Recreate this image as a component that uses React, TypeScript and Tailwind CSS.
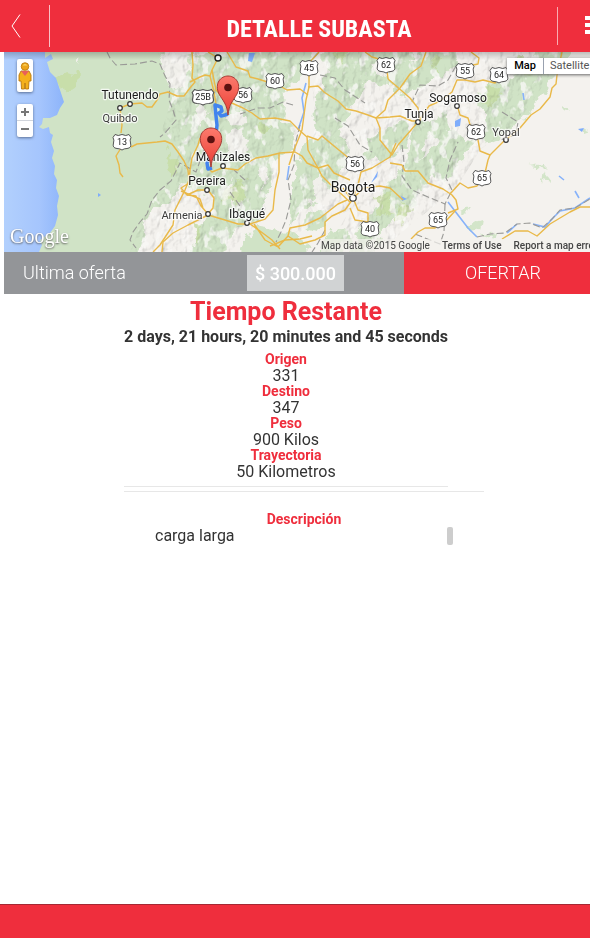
import React from "react";

const ROADS = [
  "M192 52L193 65L192 78L195 82L190 88L184 96L177 96L168 92L160 94L157 100L152 107L147 107L142 103L130 104L120 108L122 125L121 133",
  "M121 148L116 156L119 165L120 173L123 177",
  "M131 147L137 144L157 142L165 141L172 144L178 152L184 161L188 170L189 182",
  "M190 82L200 77L205 75L210 76L212 70L218 58L208 52",
  "M212 70L216 90L225 100L243 108L252 113L260 119L275 118L290 121L298 129L307 137L308 150L318 168",
  "M227 52L236 67L248 71L250 77L258 79L280 86L287 90L300 89L308 95",
  "M319 52L309 63L309 87L306 100L304 115L302 130L294 150L289 165",
  "M308 87L318 86L324 92L330 96L338 101L346 109L356 111L368 115L376 118L385 110L388 100L400 88L410 74L421 66L426 52",
  "M307 136L318 140L322 136L334 146L345 155L353 162",
  "M365 52L372 57L386 61L388 79",
  "M376 118L380 128L380 140L392 155L398 145L418 122L429 106L440 101L452 92L457 80L465 80L475 82L483 80L495 83L500 76L514 69L526 68",
  "M376 118L390 117L400 116L412 121L418 121",
  "M388 79L402 91L410 98L418 108L420 121",
  "M458 108L460 115L468 118L471 128L478 140L480 151L490 155L505 140L520 128L531 115L540 109L550 97L552 88L556 84L557 75L562 52",
  "M471 52L479 58L478 64L468 66",
  "M208 168L212 172L222 168L238 170L245 164L256 158L268 156L280 153L295 152L302 156L307 163L318 168L322 176L330 184L337 190L350 202",
  "M279 153L279 172L275 190L273 210L265 219L250 224L238 224L225 220L208 215",
  "M250 224L260 231L272 240L280 249M254 224L265 240L278 247L288 236L290 228L305 225L320 218L338 204L347 200",
  "M288 236L300 244L315 240L325 235L325 222L332 216L345 210L352 200L343 188",
  "M270 246L285 240L300 239L312 236",
  "M353 198L358 185L361 172L372 168L390 157L396 143",
  "M353 198L358 210L368 213L368 222L355 220L350 208",
  "M353 198L364 188L380 186L390 188L403 200",
  "M318 168L328 165L334 173L350 180",
  "M390 163L402 165L405 171L418 171L428 183L443 189L452 195L456 200L458 209L448 213",
  "M450 194L460 183L468 188L477 186L485 173L488 160L490 155",
  "M411 239L418 232L425 228L435 228L445 222L455 211",
  "M502 239L515 231L528 231L537 236L550 224L570 212L580 207L590 207",
  "M189 180L185 190L175 210L173 225L160 245L153 252",
  "M162 252L163 242L173 233L188 225L200 219L208 215",
  "M200 138L198 145L192 158L190 170L189 183L181 188L187 195L198 190L208 190L214 198L213 208L208 214",
  "M187 195L196 196L201 206L208 214M181 191L200 199L203 208",
  "M210 76L214 92L216 104",
];

const BORDERS = [
  "M107 52L110 58L116 65L135 64L152 61L160 64L165 76L170 84L169 100L173 110L176 120L165 133L160 137",
  "M204 150L196 172L180 163L171 181L160 190L152 200L147 214L140 222L133 232L130 240L136 248",
  "M293 105L283 102L270 108L258 108L240 114",
  "M300 125L295 145L294 165L288 180L291 200L286 220L281 232L276 242",
  "M320 75L335 78L345 90L365 103",
  "M335 118L348 126L360 145L372 152",
  "M456 66L448 80L438 86L420 85L412 102",
  "M502 112L518 122L516 135L500 140",
  "M402 145L404 162L402 176L412 190L428 197L445 204L452 190L446 178L450 160L458 142",
  "M477 237L490 234L505 233L517 224L530 223L542 228L552 219L560 210L575 208L590 199",
  "M445 204L444 232L440 244L415 234",
  "M325 230L318 243L312 252",
  "M230 192L240 206L236 216M245 180L234 170",
];

const SHIELDS: [string, number, number][] = [
  ["45", 309, 68],
  ["62", 386, 65],
  ["55", 465, 71],
  ["64", 499, 75],
  ["60", 275, 81],
  ["56", 243, 95],
  ["25B", 203, 97],
  ["13", 122, 142],
  ["62", 476, 132],
  ["56", 355, 164],
  ["65", 482, 178],
  ["65", 438, 220],
  ["40", 370, 229],
];

type City = { name: string; x: number; y: number; size: number; dot: [number, number] };

const CITIES: City[] = [
  { name: "Tutunendo", x: 130, y: 99, size: 12, dot: [130, 104] },
  { name: "Quibdo", x: 120, y: 122, size: 11, dot: [120, 108] },
  { name: "Manizales", x: 223, y: 161, size: 12, dot: [223, 166] },
  { name: "Pereira", x: 207, y: 185, size: 12, dot: [207, 190] },
  { name: "Armenia", x: 182, y: 219, size: 11, dot: [208, 214] },
  { name: "Ibagué", x: 247, y: 218, size: 12, dot: [247, 223] },
  { name: "Bogota", x: 353, y: 192, size: 14, dot: [353, 198] },
  { name: "Tunja", x: 419, y: 118, size: 12, dot: [418, 122] },
  { name: "Sogamoso", x: 458, y: 102, size: 12, dot: [457, 106] },
  { name: "Yopal", x: 506, y: 136, size: 11, dot: [506, 140] },
];

const MOUNTAINS =
  "M158 52H306L284 95L285 120L300 130L278 155L276 190L260 220L230 252H130L146 210L170 178L180 150L162 130L172 98ZM325 52H565L520 120L480 150L455 190L410 225L380 252H325L350 210L290 236L294 190L310 155L316 120L312 90Z";

function Pin({ x, y }: { x: number; y: number }) {
  return (
    <g transform={`translate(${x} ${y})`}>
      <path
        d="M0 0C-1 -11 -5 -14 -9 -21C-14 -32 -7 -39 0 -39C7 -39 14 -32 9 -21C5 -14 1 -11 0 0Z"
        fill="url(#pin)"
        stroke="#a63a34"
      />
      <circle cx="0" cy="-27.5" r="3.8" fill="#5c1110" />
    </g>
  );
}

function MapDrawing() {
  return (
    <svg
      viewBox="4 52 586 200"
      preserveAspectRatio="xMinYMid slice"
      className="block h-full w-full font-[Roboto,sans-serif]"
      role="img"
      aria-label="Map"
    >
      <defs>
        <linearGradient id="sea" x1="0" x2="1">
          <stop offset="0" stopColor="#b2d0fd" />
          <stop offset="0.6" stopColor="#a5c5fd" />
          <stop offset="1" stopColor="#8db4fa" />
        </linearGradient>
        <linearGradient id="pin" x1="0" x2="0" y1="0" y2="1">
          <stop offset="0" stopColor="#fc7a6d" />
          <stop offset="1" stopColor="#ea3f35" />
        </linearGradient>
        <linearGradient id="topShade" x1="0" x2="0" y1="0" y2="1">
          <stop offset="0" stopColor="#000" stopOpacity="0.22" />
          <stop offset="1" stopColor="#000" stopOpacity="0" />
        </linearGradient>
        <filter id="relief" x="0" y="0" width="100%" height="100%">
          <feTurbulence type="fractalNoise" baseFrequency="0.11 0.08" numOctaves="4" seed="8" />
          <feColorMatrix values="0 0 0 0 0  0 0 0 0 0  0 0 0 0 0  1 0 0 0 0" />
          <feDiffuseLighting surfaceScale="5" diffuseConstant="1.15" lightingColor="#ffffff">
            <feDistantLight azimuth="215" elevation="60" />
          </feDiffuseLighting>
          <feComposite in2="SourceGraphic" operator="in" />
        </filter>
        <filter id="clearings" x="0" y="0" width="100%" height="100%">
          <feTurbulence type="fractalNoise" baseFrequency="0.1 0.07" numOctaves="3" seed="21" />
          <feColorMatrix values="0 0 0 0 0.95  0 0 0 0 0.945  0 0 0 0 0.925  9 0 0 0 -5" />
          <feComposite in2="SourceGraphic" operator="in" />
        </filter>
        <filter id="ragged" x="0" y="0" width="100%" height="100%">
          <feTurbulence type="fractalNoise" baseFrequency="0.08" numOctaves="3" seed="4" />
          <feDisplacementMap in="SourceGraphic" scale="16" xChannelSelector="R" yChannelSelector="G" />
        </filter>
      </defs>

      <rect x="4" y="52" width="586" height="200" fill="#f4f2ee" />

      <g filter="url(#ragged)">
        <path
          fill="#d0e3c6"
          d="M30 40H162L170 75L184 92L188 60L212 54L245 40H318L308 68L286 90L284 120L296 128L290 150L272 160L270 190L258 218L236 230L220 260H190L198 226L215 216L214 196L186 185L168 200L150 214L135 260H20Z"
        />
        <path
          fill="#d0e3c6"
          d="M325 40H415L408 62L422 48L462 46L455 66L428 84L405 98L388 84L366 82L352 112L338 130L350 150L340 178L318 194L300 210L290 226L292 190L300 155L318 132L312 108L326 84Z"
        />
        <path
          fill="#d0e3c6"
          d="M386 128L402 120L408 136L396 158L366 162L370 140ZM412 128L446 112L450 134L478 140L462 158L450 178L430 180L416 204L398 212L380 240L372 262H345L360 230L378 204L388 182L404 164ZM476 96L492 82L520 72L545 46H576L548 84L530 112L516 122L508 136L480 142L486 118Z"
        />
        <path
          fill="#d0e3c6"
          d="M255 226L280 230L300 238L312 248L292 262H235ZM306 214L326 206L330 222L316 232L303 228ZM322 240L344 226L352 240L335 260H318Z"
        />
        <path
          fill="#f1f0eb"
          d="M158 52L177 54L176 76L186 92L174 90L164 74ZM228 136L240 130L248 142L246 152L236 158L228 148ZM226 112L240 112L244 124L232 126ZM206 102L210 116L199 128L195 112ZM370 66L388 60L394 78L378 76ZM222 190L231 178L238 202L230 209ZM258 172L266 166L264 190ZM312 188L322 176L330 190L317 202ZM425 140L432 130L437 144L419 160ZM84 58L80 66L78 60Z"
        />
        <path
          fill="#c6dca0"
          opacity="0.75"
          d="M58 78L68 72L78 75L76 90L64 94ZM168 150L178 158L174 178L166 168ZM228 186L246 180L248 196L236 206L222 200ZM258 122L270 124L266 136L256 132ZM336 50L350 48L342 66ZM374 196L392 192L392 214L378 218ZM400 202L412 210L402 224L394 220ZM484 86L500 88L496 104L486 102ZM516 56L534 58L530 76L518 74ZM432 54L444 58L436 70ZM190 220L202 228L198 244Z"
        />
        <path
          fill="#d3e5c9"
          d="M526 166L542 164L550 172L540 168ZM546 176L552 184L544 182ZM565 106L572 112L564 110ZM582 126L588 130L582 132ZM470 222L482 218L480 230L470 232ZM484 236L494 230L492 240ZM460 212L468 208L464 216Z"
        />
      </g>

      <path opacity="0.8" filter="url(#clearings)" d={MOUNTAINS} />
      <path className="mix-blend-multiply" opacity="0.26" filter="url(#relief)" fill="#fff" d={MOUNTAINS} />

      <path
        fill="url(#sea)"
        d="M4 52H45V58L51 54L53 59L47 62L50 72L56 78L60 90L64 102L60 108L57 115L50 118L43 118L42 124L39 127L43 129L49 127L50 133L53 135L51 142L54 151L52 158L55 166L54 174L57 180L56 188L59 196L57 206L58 215L55 226L50 233L40 240L42 245L39 252H4Z"
      />

      <g fill="#7fadfb">
        <path d="M249 53L255 53L252 62L248 61ZM455 121L461 118L460 126L455 127ZM371 183L378 171L377 177ZM98 193L101 195L98 197ZM578 129L584 128L582 132ZM401 196L407 199L402 201Z" />
        <path
          d="M318 53L309 63M306 83L302 98L304 112L298 130M289 166L287 180M448 202L458 215L468 228L477 237M507 233L517 224M533 224L545 227L552 219L560 211L575 208L590 198M575 191L579 198M523 93L524 100M559 176L564 180"
          fill="none"
          stroke="#86b2fa"
          strokeWidth="1.6"
        />
      </g>

      <g fill="none" stroke="#9a9a97" strokeWidth="1.1" strokeDasharray="7 3">
        {BORDERS.map((d) => (
          <path key={d} d={d} />
        ))}
      </g>
      <g fill="none" stroke="#e9b949" strokeWidth="1.4" strokeLinejoin="round">
        {ROADS.map((d) => (
          <path key={d} d={d} />
        ))}
      </g>

      <path
        d="M228 114L225 115L221 116L219 113L222 111L221 107L215 105L216 116L217 125L216 135M209 158L207 163L208 169L212 168"
        fill="none"
        stroke="#4284ee"
        strokeWidth="3.5"
        strokeLinejoin="round"
      />

      {SHIELDS.map(([label, x, y]) => (
        <g key={`${label}-${x}`} transform={`translate(${x} ${y})`}>
          <path
            transform={label.length > 2 ? "scale(1.2 1)" : undefined}
            d="M-7 -7.500Q-4 -5.500 0 -7.500Q4 -5.500 7 -7.500L9 -4.500Q7.500 -2 8.500 1Q10 6 5 6.500Q2 6.500 0 8Q-2 6.500 -5 6.500Q-10 6 -8.500 1Q-7.500 -2 -9 -4.500Z"
            fill="#fff"
            stroke="#555"
          />
          <text y="3" textAnchor="middle" fontSize="9" fill="#222">
            {label}
          </text>
        </g>
      ))}

      {CITIES.map((c) => (
        <g key={c.name}>
          <circle cx={c.dot[0]} cy={c.dot[1]} r={c.size > 12 ? 3.2 : 2.3} fill="#fff" stroke="#333" strokeWidth="1.2" />
          <text
            x={c.x}
            y={c.y}
            textAnchor="middle"
            fontSize={c.size}
            fill={c.size > 11 ? "#1c1c1c" : "#3c3c3c"}
            stroke="#fff"
            strokeWidth="2.5"
            strokeOpacity="0.75"
            strokeLinejoin="round"
            paintOrder="stroke"
          >
            {c.name}
          </text>
        </g>
      ))}
      <circle cx="218" cy="58" r="3" fill="#fff" stroke="#222" strokeWidth="1.4" />

      <Pin x={228} y={115} />
      <Pin x={211} y={167} />
      <rect x="4" y="52" width="586" height="8" fill="url(#topShade)" />
    </svg>
  );
}

function MapPanel() {
  return (
    <section className="relative ml-1 h-[200px] overflow-hidden font-[Roboto,sans-serif]">
      <MapDrawing />

      <button
        aria-label="Street View"
        className="absolute left-[13px] top-[7px] flex h-[33px] w-4 items-center justify-center rounded-xs bg-white shadow-[0_1px_3px_#5a6f95]"
      >
        <svg viewBox="0 0 14 28" className="h-7 w-3.5">
          <path
            d="M3 9H11L13 13V19H11L10.500 27H7.500L7 21L6.500 27H3.500L3 19H1V13Z"
            fill="#f4b01b"
            stroke="#b9770c"
            strokeWidth="0.9"
          />
          <path d="M3 9H11L7 14Z" fill="#e8605a" />
          <circle cx="7" cy="4.500" r="3.800" fill="#eda51b" stroke="#b9770c" strokeWidth="0.8" />
          <path d="M4.500 3.500Q7 0.500 9.500 3.500Z" fill="#fbd768" />
        </svg>
      </button>

      <div className="absolute left-[13px] top-[52px] flex w-4 flex-col rounded-xs bg-white shadow-[0_1px_3px_#5a6f95]">
        <button aria-label="Zoom in" className="flex h-4 items-center justify-center">
          <svg viewBox="0 0 8 8" className="size-2">
            <path d="M0 4H8M4 0V8" stroke="#777" strokeWidth="2" />
          </svg>
        </button>
        <span className="h-px w-full bg-gray-300" />
        <button aria-label="Zoom out" className="flex h-4 items-center justify-center">
          <svg viewBox="0 0 8 8" className="size-2">
            <path d="M0 4H8" stroke="#777" strokeWidth="2" />
          </svg>
        </button>
      </div>

      <div className="absolute left-[503px] top-[6px] flex h-4 text-[11px] leading-4 shadow-[0_1px_3px_#666]">
        <button className="w-9 bg-white font-medium text-black">Map</button>
        <button className="w-[57px] border-l border-gray-400 bg-white pl-1.5 text-left text-[#565656]">Satellite</button>
      </div>

      <a
        href="#google"
        className="absolute bottom-1 left-[6px] font-['Liberation_Serif',serif] text-[20px] leading-6 text-white [text-shadow:0_1px_2px_#555]"
      >
        Google
      </a>
      <div className="absolute bottom-0 left-[317px] flex gap-3 whitespace-nowrap bg-[#f4f2ee]/70 text-[10px] leading-[13px] text-[#444]">
        <span>Map data ©2015 Google</span>
        <a href="#terms" className="font-medium">Terms of Use</a>
        <a href="#report" className="font-medium">Report a map error</a>
      </div>
    </section>
  );
}

const DETAILS = [
  ["Origen", "331"],
  ["Destino", "347"],
  ["Peso", "900 Kilos"],
  ["Trayectoria", "50 Kilometros"],
];

export default function App() {
  return (
    <div className="flex min-h-screen flex-col overflow-x-hidden bg-white font-[Roboto,sans-serif] text-[#333]">
      <header className="flex h-[52px] items-center bg-[#ef2e3d] text-white">
        <button aria-label="Volver" className="flex h-[42px] w-[50px] items-center border-r border-white/70 pl-[11px]">
          <svg viewBox="0 0 10 24" className="h-6 w-2.5" fill="none" stroke="currentColor">
            <path d="M9 0.500L1 12L9 23.500" />
          </svg>
        </button>
        <h1 className="flex-1 pl-[31px] pt-1.5 text-center font-['Roboto_Condensed',Roboto,sans-serif] text-2xl font-bold">
          DETALLE SUBASTA
        </h1>
        <button aria-label="Menú" className="flex h-[38px] w-[33px] items-center justify-end border-l border-white/60">
          <svg viewBox="0 0 5 20" className="h-5 w-[5px]" fill="currentColor">
            <path d="M0 0H5V4H0ZM0 7H5V11H0ZM0 14H5V18H0Z" />
          </svg>
        </button>
      </header>

      <MapPanel />

      <section className="ml-1 flex h-[42px] text-lg text-white">
        <div className="flex w-[400px] items-center bg-[#939598] pl-[19px]">
          <label htmlFor="oferta" className="w-56 font-light">Ultima oferta</label>
          <input
            id="oferta"
            readOnly
            value="$ 300.000"
            className="h-9 w-[97px] bg-[#d1d3d4] text-center font-medium text-white outline-none"
          />
        </div>
        <button className="flex-1 bg-[#ef2e3d] pl-3 font-light">OFERTAR</button>
      </section>

      <main className="flex flex-1 flex-col items-center pl-[18px]">
        <div className="w-[360px] text-center">
          <div className="mr-9 border-b border-[#e7e7e7] pb-[6px]">
            <h2 className="pt-1 text-[25px] font-bold leading-7 text-[#ef2e3d]">Tiempo Restante</h2>
            <p className="mb-1 whitespace-nowrap text-base font-bold leading-[22px]">
              2 days, 21 hours, 20 minutes and 45 seconds
            </p>
            <dl>
              {DETAILS.map(([label, value]) => (
                <React.Fragment key={label}>
                  <dt className="text-sm font-bold leading-[15px] text-[#ef2e3d]">{label}</dt>
                  <dd className="text-base leading-[17px]">{value}</dd>
                </React.Fragment>
              ))}
            </dl>
          </div>
          <hr className="mt-1 border-[#e7e7e7]" />
          <h3 className="mt-5 text-sm font-bold leading-[15px] text-[#ef2e3d]">Descripción</h3>
          <div className="mr-[31px] flex justify-between pl-[31px] text-left">
            <p className="text-base leading-[17px]">carga larga</p>
            <span className="h-[18px] w-1.5 rounded-xs bg-[#cdcdcd]" />
          </div>
        </div>
      </main>

      <footer className="h-[34px] border-t border-[#a52834] bg-[#ef2e3d]" />
    </div>
  );
}
